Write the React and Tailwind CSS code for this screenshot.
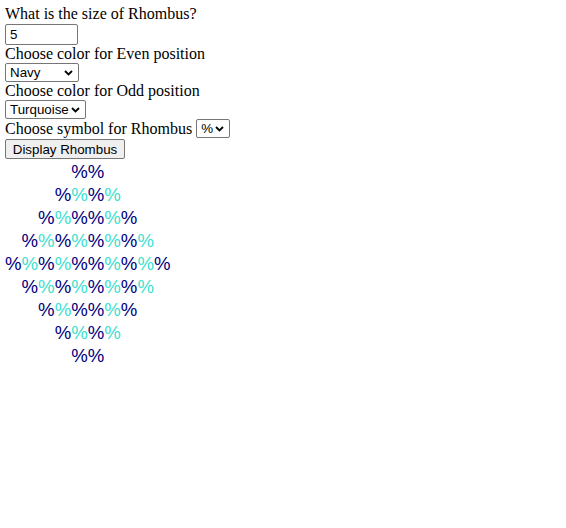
import React from "react";

function Chevron() {
  return (
    <svg width="9" height="6" viewBox="0 0 9 6" className="shrink-0">
      <path d="M1 1 L4.5 4.5 L8 1" fill="none" stroke="#000" strokeWidth="1.8" />
    </svg>
  );
}

function FakeSelect({ value, width }) {
  return (
    <div
      className={`inline-flex items-center justify-between h-[19px] border border-[#767676] rounded-[2px] bg-white pl-[4px] pr-[5px] font-['Liberation_Sans',Arial,sans-serif] text-[13.33px] leading-[15px] text-black align-middle ${width}`}
    >
      <span>{value}</span>
      <Chevron />
    </div>
  );
}

function Row({ n }) {
  const half = Array.from({ length: n }, (_, i) => i % 2 === 0);
  const all = [...half, ...half];
  return (
    <div className="h-[23px] leading-[23px]">
      {all.map((even, i) => (
        <span key={i} className={even ? "text-[#000080]" : "text-[#40E0D0]"}>
          %
        </span>
      ))}
    </div>
  );
}

export default function App() {
  const sizes = [1, 2, 3, 4, 5, 4, 3, 2, 1];
  return (
    <div className="bg-white min-h-[528px] pl-[5px] pt-[4px] font-['Liberation_Serif','Times_New_Roman',serif] text-[16px] text-black">
      <div className="leading-[20px] h-[20px]">What is the size of Rhombus?</div>
      <div className="w-[73px] h-[21px] border border-[#767676] rounded-[2px] pl-[4px] font-['Liberation_Sans',Arial,sans-serif] text-[13.33px] leading-[19px]">
        5
      </div>
      <div className="leading-[18px] h-[18px]">Choose color for Even position</div>
      <div className="h-[19px] flex">
        <FakeSelect value="Navy" width="w-[74px]" />
      </div>
      <div className="leading-[18px] h-[18px]">Choose color for Odd position</div>
      <div className="h-[19px] flex">
        <FakeSelect value="Turquoise" width="w-[81px]" />
      </div>
      <div className="h-[19px] flex items-center gap-[4px]">
        <span className="leading-[18px]">Choose symbol for Rhombus</span>
        <FakeSelect value="%" width="w-[34px]" />
      </div>
      <div className="flex mt-[1px]">
        <div className="h-[20px] w-[120px] flex items-center justify-center border border-[#767676] rounded-[2px] bg-[#efefef] font-['Liberation_Sans',Arial,sans-serif] text-[13.33px] leading-[15px]">
          Display Rhombus
        </div>
      </div>
      <div className="inline-block text-center font-['Liberation_Sans',Arial,sans-serif] text-[18.6px] pt-[0.5px]">
        {sizes.map((n, i) => (
          <Row key={i} n={n} />
        ))}
      </div>
    </div>
  );
}
